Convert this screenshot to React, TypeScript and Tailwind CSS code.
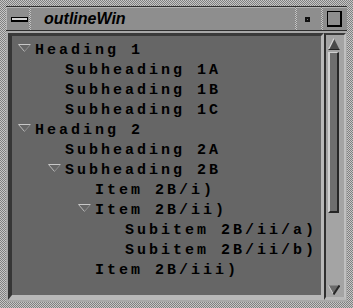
import React from "react";

type Row = { text: string; level: number; open?: boolean };

const rows: Row[] = [
  { text: "Heading 1", level: 0, open: true },
  { text: "Subheading 1A", level: 1 },
  { text: "Subheading 1B", level: 1 },
  { text: "Subheading 1C", level: 1 },
  { text: "Heading 2", level: 0, open: true },
  { text: "Subheading 2A", level: 1 },
  { text: "Subheading 2B", level: 1, open: true },
  { text: "Item 2B/i)", level: 2 },
  { text: "Item 2B/ii)", level: 2, open: true },
  { text: "Subitem 2B/ii/a)", level: 3 },
  { text: "Subitem 2B/ii/b)", level: 3 },
  { text: "Item 2B/iii)", level: 2 },
];

const indent: Record<number, string> = {
  0: "pl-[6px]",
  1: "pl-[36px]",
  2: "pl-[66px]",
  3: "pl-[96px]",
};

const dither =
  "bg-[repeating-conic-gradient(#c6c6c6_0%_25%,#808080_0%_50%)] bg-[length:2px_2px]";

function Disclosure() {
  return (
    <svg width="13" height="8" viewBox="0 0 13 8" className="block">
      <line x1="0.5" y1="0.5" x2="12.5" y2="0.5" stroke="#c8c8c8" strokeWidth="1" />
      <line x1="0.5" y1="0.5" x2="6.5" y2="7.5" stroke="#bcbcbc" strokeWidth="1" />
      <line x1="12.5" y1="0.5" x2="6.5" y2="7.5" stroke="#8e8e8e" strokeWidth="1" />
    </svg>
  );
}

function UpArrow() {
  return (
    <svg width="12" height="12" viewBox="0 0 12 12" className="block">
      <polygon points="6,0.5 11.5,11.5 0.5,11.5" fill="#4a4a4a" />
      <line x1="6" y1="0.5" x2="0.5" y2="11.5" stroke="#d8d8d8" strokeWidth="1.2" />
      <line x1="0.5" y1="11.5" x2="11.5" y2="11.5" stroke="#222" strokeWidth="1" />
    </svg>
  );
}

function DownArrow() {
  return (
    <svg width="12" height="10" viewBox="0 0 12 10" className="block">
      <polygon points="0.5,0.5 11.5,0.5 5.5,9.5" fill="#6a6a6a" />
      <line x1="0.5" y1="0.5" x2="5.5" y2="9.5" stroke="#d0d0d0" strokeWidth="1" />
      <line x1="11.5" y1="0.5" x2="5.5" y2="9.5" stroke="#262626" strokeWidth="2" />
    </svg>
  );
}

export default function App() {
  return (
    <div className={`w-[353px] h-[308px] p-[6px] ${dither}`}>
      <div className="w-full h-full bg-[#9c9c9c] flex flex-col">
        {/* title bar */}
        <div className="h-[25px] flex border-t border-b border-[#2e2e2e] bg-[#8e8e8e]">
          <div className="w-[23px] flex items-center justify-center border-t border-l border-[#b4b4b4]">
            <div className="w-[17px] h-[5px] bg-[#d4d4d4] border border-black border-b-2 ml-[2px]" />
          </div>
          <div className={`w-[2px] ${dither}`} />
          <div className="flex-1 flex items-center pl-[13px] border-t border-[#b4b4b4]">
            <span className="text-[16px] italic font-bold text-black leading-none [font-family:'Liberation_Sans',Arial,sans-serif] mt-[-1px]">
              outlineWin
            </span>
          </div>
          <div className={`w-[2px] ${dither}`} />
          <div className="w-[24px] flex items-center justify-center border-t border-[#b4b4b4]">
            <div className="w-[5px] h-[5px] bg-[#111] flex items-center justify-center mr-[3px]">
              <div className="w-[1px] h-[1px] bg-[#777]" />
            </div>
          </div>
          <div className={`w-[2px] ${dither}`} />
          <div className="w-[24px] flex items-center justify-center border-t border-[#b4b4b4]">
            <div className="w-[15px] h-[16px] border border-black border-r-2 border-b-2 mr-[2px]" />
          </div>
        </div>

        {/* body */}
        <div className="flex-1 flex pt-[2px] pl-[2px] pr-[1px] pb-[2px] bg-[#a8a8a8]">
          <div className="flex-1 border-l-4 border-t-[3px] border-r-[3px] border-b-[5px] border-l-[#363636] border-t-[#3a3a3a] border-r-[#b8b8b8] border-b-[#b8b8b8] bg-[#666666] pt-[5px]">
            {rows.map((r, i) => (
              <div key={i} className={`flex h-5 items-start ${indent[r.level]}`}>
                <div className="w-[17px] pt-[3px]">{r.open ? <Disclosure /> : null}</div>
                <span className="text-[15px] leading-5 font-bold text-black tracking-[3px] whitespace-pre [font-family:'Liberation_Mono','Courier_New',monospace]">
                  {r.text}
                </span>
              </div>
            ))}
          </div>
          <div className="w-[22px] flex flex-col border-l-2 border-t-2 border-r-2 border-b-[3px] border-l-[#2e2e2e] border-t-[#3a3a3a] border-r-[#c0c0c0] border-b-[#b8b8b8] bg-[#a4a4a4] pl-[2px]">
            <div className="mt-[3px]">
              <UpArrow />
            </div>
            <div className="mt-[2px] w-[11px] h-[161px] border-l-2 border-t border-r-2 border-b-2 border-l-[#cfcfcf] border-t-[#cfcfcf] border-r-[#262626] border-b-[#262626] bg-[#6e6e6e]" />
            <div className="flex-1" />
            <div className="mb-[2px]">
              <DownArrow />
            </div>
          </div>
        </div>
      </div>
    </div>
  );
}
